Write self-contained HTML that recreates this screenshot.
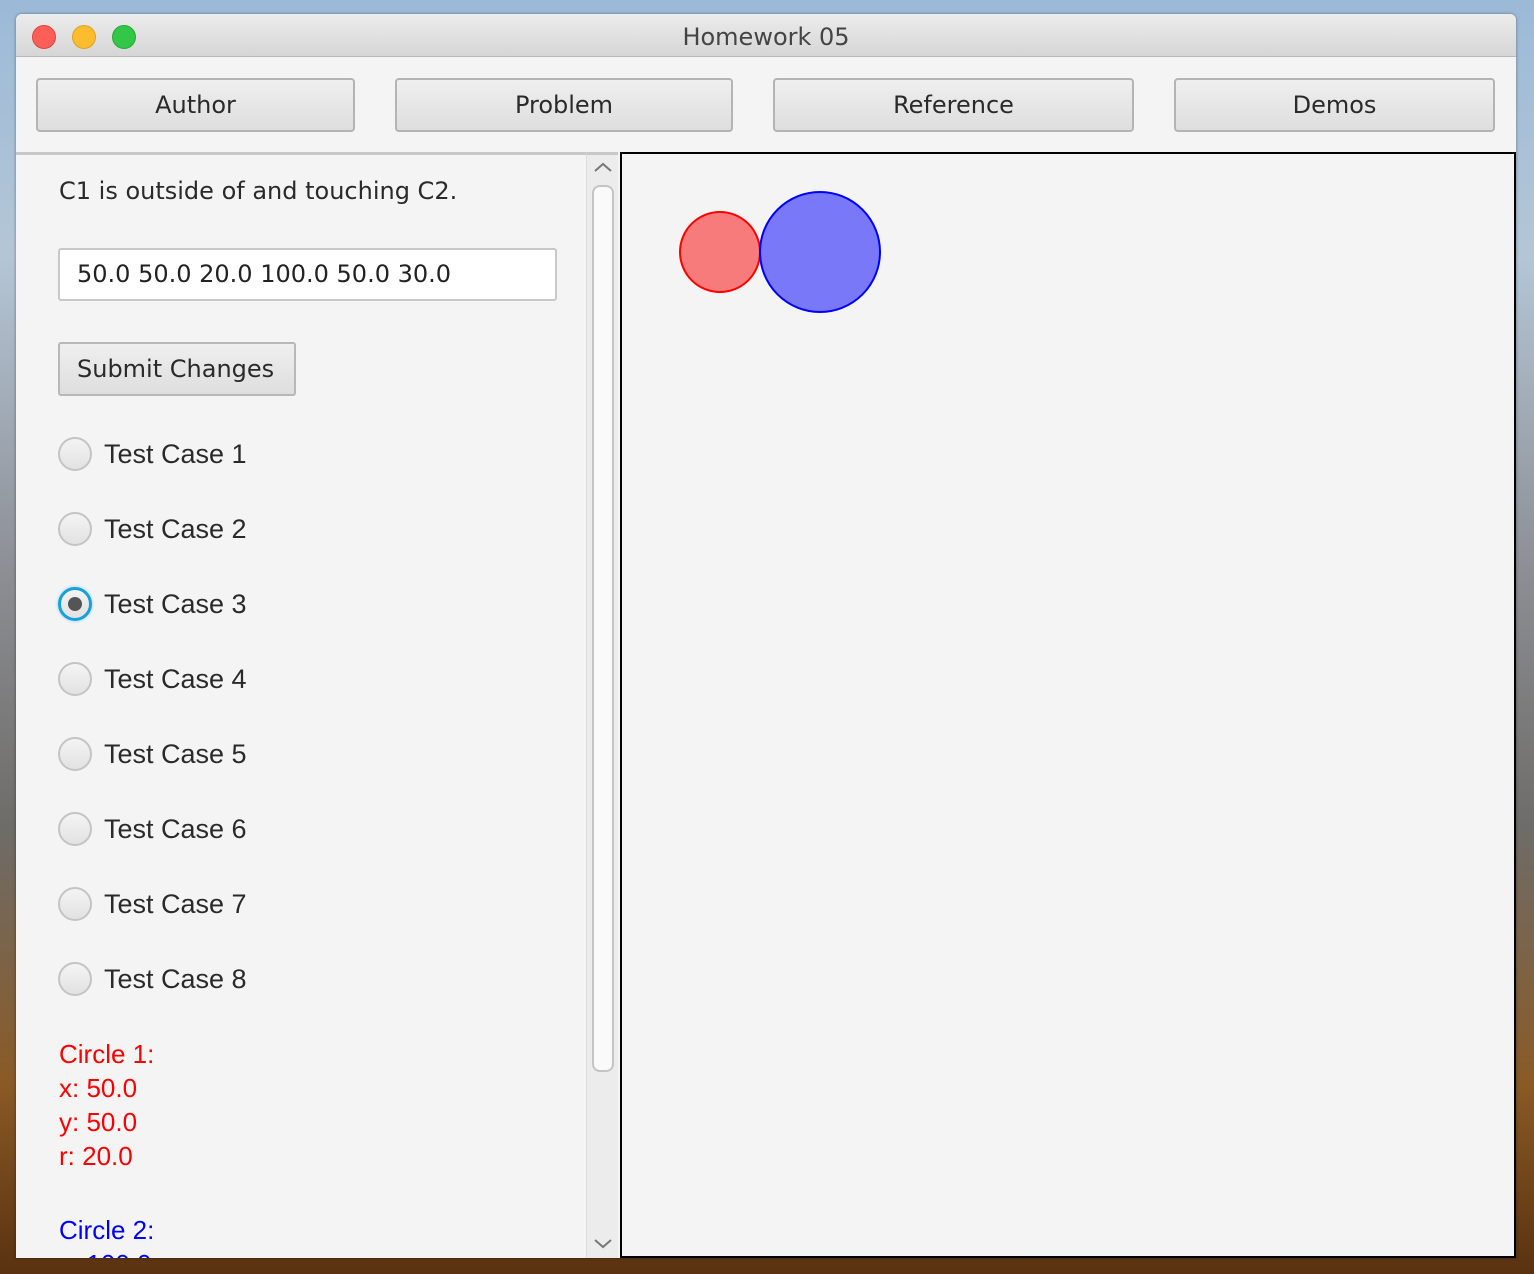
<!DOCTYPE html>
<html><head><style>
*{margin:0;padding:0;box-sizing:border-box}
body{width:1534px;height:1274px;overflow:hidden;position:relative;font-family:"Liberation Sans",sans-serif;
background:linear-gradient(180deg,#9bbad8 0%,#b4c6d6 20%,#8c8e94 45%,#6e6c68 65%,#8a5a26 85%,#5a3210 100%);}
.win{position:absolute;left:16px;top:14px;width:1500px;height:1244px;background:#f4f4f4;border-radius:6px 6px 0 0;overflow:hidden;box-shadow:0 0 3px rgba(0,0,0,.4)}
.title{height:43px;background:linear-gradient(#ececec,#d6d6d6);border-bottom:1px solid #b8b8b8;text-align:center;font-family:"DejaVu Sans",sans-serif;font-size:24px;line-height:46px;color:#444}
.dot{position:absolute;top:11px;width:24px;height:24px;border-radius:50%}
.btn{position:absolute;top:64px;height:54px;border:2px solid #b4b4b4;border-radius:4px;background:linear-gradient(#efefef,#dedede);font-family:"DejaVu Sans",sans-serif;font-size:24px;color:#2a2a2a;text-align:center;line-height:51px}
.left{position:absolute;left:0;top:138px;width:570px;height:1106px;border-top:3px solid #c8c8c8;overflow:hidden}
.sb{position:absolute;left:570px;top:138px;width:32px;height:1106px;background:#ececec;border-top:3px solid #c8c8c8;border-left:1px solid #ddd}
.thumb{position:absolute;left:5px;top:30px;width:22px;height:887px;border:2px solid #c4c4c4;border-radius:8px;background:#fafafa}
.canvas{position:absolute;left:604px;top:138px;width:896px;height:1106px;border:2px solid #000;background:#f4f4f4}
.t{position:absolute;left:43px;font-family:"DejaVu Sans",sans-serif;font-size:24px;color:#2a2a2a}
.radio{position:absolute;left:42px;width:34px;height:34px;border-radius:50%;border:2px solid #c4c4c4;background:linear-gradient(#f4f4f4,#e2e2e2)}
.rl{position:absolute;left:88px;font-size:27px;color:#2a2a2a}
.c{position:absolute;left:43px;font-size:26px;line-height:34px}
</style></head><body>
<div class="win">
<div class="title">Homework 05</div>
<div class="dot" style="left:16px;background:#fc5f57;border:1px solid #e0443e"></div>
<div class="dot" style="left:56px;background:#fdbc2e;border:1px solid #dea123"></div>
<div class="dot" style="left:96px;background:#33c748;border:1px solid #27aa35"></div>
<div class="btn" style="left:20px;width:319px">Author</div>
<div class="btn" style="left:379px;width:338px">Problem</div>
<div class="btn" style="left:757px;width:361px">Reference</div>
<div class="btn" style="left:1158px;width:321px">Demos</div>
<div class="left">
<div class="t" style="top:22px">C1 is outside of and touching C2.</div>
<div style="position:absolute;left:42px;top:93px;width:499px;height:53px;border:2px solid #c8c8c8;border-radius:3px;background:#fff;font-family:'DejaVu Sans',sans-serif;font-size:24px;line-height:49px;padding-left:17px;color:#222">50.0 50.0 20.0 100.0 50.0 30.0</div>
<div style="position:absolute;left:42px;top:187px;width:238px;height:54px;border:2px solid #b8b8b8;border-radius:3px;background:linear-gradient(#efefef,#dedede);font-family:'DejaVu Sans',sans-serif;font-size:24px;line-height:50px;padding-left:17px;color:#2a2a2a">Submit Changes</div>
<div class="radio" style="top:282px"></div><div class="rl" style="top:284px">Test Case 1</div>
<div class="radio" style="top:357px"></div><div class="rl" style="top:359px">Test Case 2</div>
<div class="radio" style="top:432px;border:3px solid #18a0dc;box-shadow:0 0 3px #8cd0f0"><div style="position:absolute;left:7px;top:7px;width:14px;height:14px;border-radius:50%;background:#555"></div></div><div class="rl" style="top:434px">Test Case 3</div>
<div class="radio" style="top:507px"></div><div class="rl" style="top:509px">Test Case 4</div>
<div class="radio" style="top:582px"></div><div class="rl" style="top:584px">Test Case 5</div>
<div class="radio" style="top:657px"></div><div class="rl" style="top:659px">Test Case 6</div>
<div class="radio" style="top:732px"></div><div class="rl" style="top:734px">Test Case 7</div>
<div class="radio" style="top:807px"></div><div class="rl" style="top:809px">Test Case 8</div>
<div class="c" style="top:882px;color:#f00">Circle 1:<br>x: 50.0<br>y: 50.0<br>r: 20.0</div>
<div class="c" style="top:1058px;color:#00f">Circle 2:<br>x: 100.0</div>
</div>
<div class="sb">
<svg style="position:absolute;left:7px;top:6px" width="18" height="12"><path d="M1 10 L9 3 L17 10" stroke="#777" stroke-width="2" fill="none"/></svg>
<div class="thumb"></div>
<svg style="position:absolute;left:7px;top:1083px" width="18" height="12"><path d="M1 2 L9 9 L17 2" stroke="#777" stroke-width="2" fill="none"/></svg>
</div>
<div class="canvas">
<svg width="892" height="1102" style="position:absolute;left:0;top:0">
<circle cx="98" cy="98" r="40" fill="#f77b7b" stroke="#f00" stroke-width="2"/>
<circle cx="198" cy="98" r="60" fill="#7878f8" stroke="#00f" stroke-width="2"/>
</svg>
</div>
</div>
</body></html>
